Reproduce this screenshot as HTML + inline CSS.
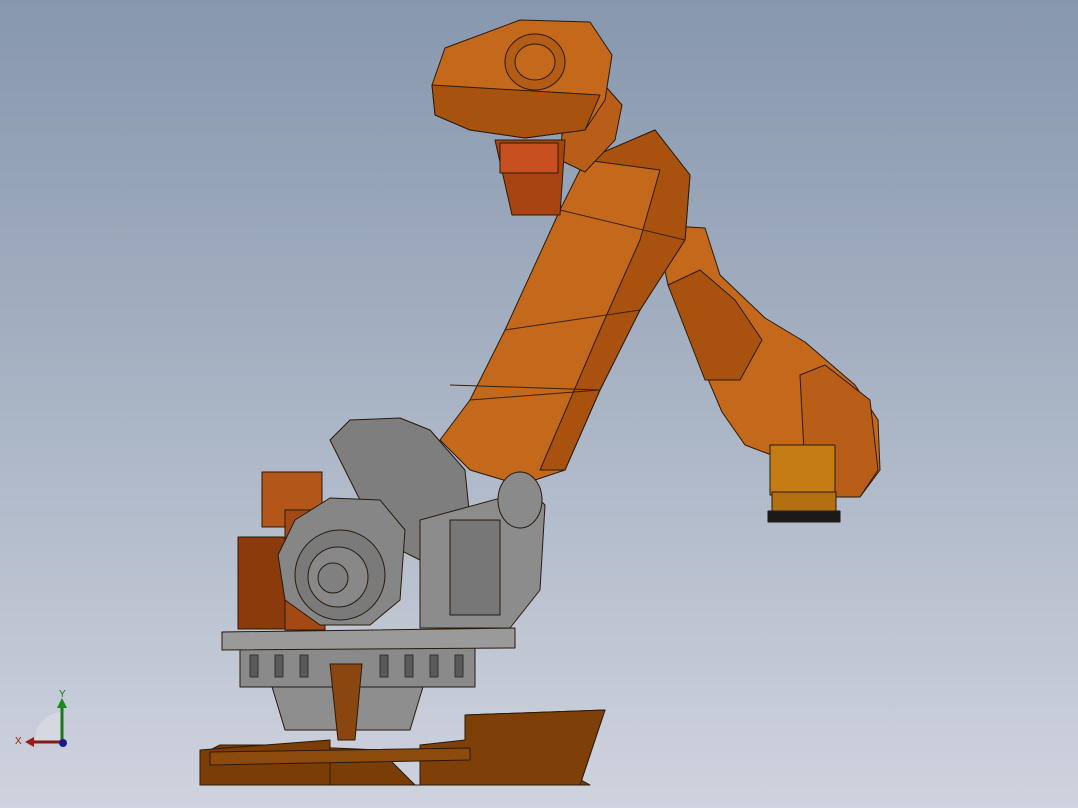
<!DOCTYPE html>
<html><head><meta charset="utf-8"><style>
html,body{margin:0;padding:0;width:1078px;height:808px;overflow:hidden}
body{background:linear-gradient(#8797ad 0%,#a9b4c5 50%,#cfd3de 100%)}
svg{position:absolute;left:0;top:0}
</style></head><body>
<svg width="1078" height="808" viewBox="0 0 1078 808">
<g stroke="#2a1a0a" stroke-width="1" stroke-linejoin="round">
<polygon points="465,715 605,710 580,785 415,785 380,750 265,745 220,745 200,755 200,785 590,785" fill="#7a3d06"/>
<polygon points="200,750 330,740 330,785 200,785" fill="#7a3d06"/>
<polygon points="465,715 605,710 580,785 420,785 420,745 465,740" fill="#7e4008"/>
<polygon points="210,752 470,748 470,760 210,765" fill="#8c4a0c"/>
<polygon points="270,680 425,680 410,730 285,730" fill="#8e8e8e"/>
<rect x="240" y="645" width="235" height="42" fill="#8a8a8a"/>
<g stroke="#333" fill="#5a5a5a">
<rect x="250" y="655" width="8" height="22"/><rect x="275" y="655" width="8" height="22"/><rect x="300" y="655" width="8" height="22"/><rect x="380" y="655" width="8" height="22"/><rect x="405" y="655" width="8" height="22"/><rect x="430" y="655" width="8" height="22"/><rect x="455" y="655" width="8" height="22"/>
</g>
<polygon points="222,632 515,628 515,648 222,650" fill="#9a9a9a"/>
<polygon points="330,664 362,664 355,740 338,740" fill="#8a4610"/>
<rect x="262" y="472" width="60" height="55" fill="#b3561a"/>
<rect x="238" y="537" width="52" height="92" fill="#8b3a0c"/>
<rect x="285" y="510" width="40" height="120" fill="#a34a14"/>
<!-- forearm -->
<polygon points="655,225 705,228 720,275 765,318 805,342 855,385 878,420 880,470 860,497 830,497 790,462 745,445 722,412 702,365 685,325 668,285" fill="#c4681c"/>
<polygon points="668,285 700,270 735,300 762,340 740,380 705,380" fill="#a9520f"/>
<polygon points="800,375 825,365 870,400 878,470 860,497 830,497 805,470" fill="#b85e18"/>
<!-- lower arm -->
<polygon points="440,440 470,400 505,330 560,210 585,160 655,130 690,175 685,240 640,310 600,390 565,470 520,485 470,470" fill="#c4681c"/>
<polygon points="585,160 655,130 690,175 685,240 640,310 600,390 565,470 540,470 600,330 640,240 660,170" fill="#a9520f"/>
<g fill="none" stroke="#3a2008"><path d="M470,400 L600,390"/><path d="M505,330 L640,310"/><path d="M560,210 L685,240"/><path d="M450,385 L600,390"/></g>
<!-- neck between head and elbow -->
<polygon points="565,95 600,80 622,105 615,140 585,172 560,160" fill="#b85e18"/>
<!-- head -->
<polygon points="432,85 445,48 520,20 590,22 612,55 605,100 585,130 525,138 470,130 435,115" fill="#c4681c"/>
<polygon points="432,85 600,95 585,130 525,138 470,130 435,115" fill="#a8520f"/>
<ellipse cx="535" cy="62" rx="30" ry="28" fill="#b35c16"/>
<ellipse cx="535" cy="62" rx="20" ry="18" fill="#c4681c"/>
<polygon points="495,140 565,140 560,215 512,215" fill="#a84410"/>
<rect x="500" y="143" width="58" height="30" fill="#c85020"/>
<rect x="770" y="445" width="65" height="50" fill="#c67c14"/>
<rect x="772" y="492" width="64" height="20" fill="#b37010"/>
<rect x="768" y="511" width="72" height="11" fill="#1a1a1a"/>
<polygon points="330,440 350,420 400,418 430,430 465,470 470,520 420,560 380,540" fill="#7e7e7e"/>
<polygon points="420,520 530,490 545,505 540,590 510,628 420,628" fill="#8c8c8c"/>
<rect x="450" y="520" width="50" height="95" fill="#777"/>
<polygon points="295,520 330,498 380,500 405,530 400,600 370,625 320,625 285,600 278,555" fill="#868686"/>
<circle cx="340" cy="575" r="45" fill="#7a7a7a"/>
<circle cx="338" cy="577" r="30" fill="#888"/>
<circle cx="333" cy="578" r="15" fill="#808080"/>
<ellipse cx="520" cy="500" rx="22" ry="28" fill="#8a8a8a"/>
</g>
<path d="M35,740 A28,28 0 0 1 62,712 L62,740 Z" fill="#d8dbe2" opacity="0.8"/>
<line x1="62" y1="742" x2="62" y2="705" stroke="#1a7a1a" stroke-width="3"/>
<polygon points="57,708 67,708 62,698" fill="#1a8a1a"/>
<line x1="62" y1="742" x2="32" y2="742" stroke="#8a1a1a" stroke-width="3"/>
<polygon points="34,737 34,747 25,742" fill="#9a1a1a"/>
<circle cx="63" cy="743" r="4" fill="#1a1a8a"/>
<text x="59" y="697" font-family="Liberation Sans,sans-serif" font-size="10" fill="#1a7a1a">Y</text>
<text x="15" y="744" font-family="Liberation Sans,sans-serif" font-size="10" fill="#9a1a1a">X</text>
</svg>
</body></html>
